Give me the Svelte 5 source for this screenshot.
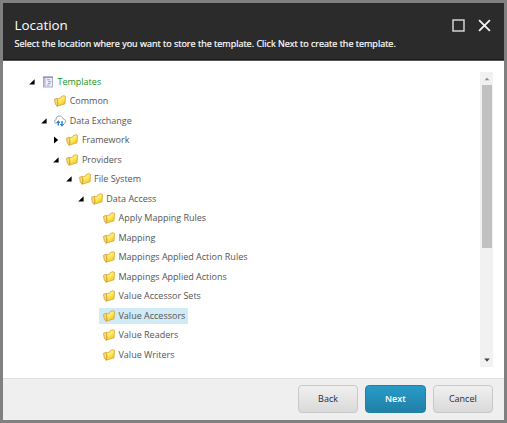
<script>
  const rows = [
    { label: 'Templates', level: 0, arrow: 'open', icon: 'template', root: true },
    { label: 'Common', level: 1, icon: 'folder' },
    { label: 'Data Exchange', level: 1, arrow: 'open', icon: 'exchange' },
    { label: 'Framework', level: 2, arrow: 'closed', icon: 'folder' },
    { label: 'Providers', level: 2, arrow: 'open', icon: 'folder' },
    { label: 'File System', level: 3, arrow: 'open', icon: 'folder' },
    { label: 'Data Access', level: 4, arrow: 'open', icon: 'folder' },
    { label: 'Apply Mapping Rules', level: 5, icon: 'folder' },
    { label: 'Mapping', level: 5, icon: 'folder' },
    { label: 'Mappings Applied Action Rules', level: 5, icon: 'folder' },
    { label: 'Mappings Applied Actions', level: 5, icon: 'folder' },
    { label: 'Value Accessor Sets', level: 5, icon: 'folder' },
    { label: 'Value Accessors', level: 5, icon: 'folder' },
    { label: 'Value Readers', level: 5, icon: 'folder' },
    { label: 'Value Writers', level: 5, icon: 'folder' }
  ];
  let selected = $state('Value Accessors');
</script>

<div class="dialog">
  <header>
    <div class="titles">
      <h1>Location</h1>
      <p>Select the location where you want to store the template. Click Next to create the template.</p>
    </div>
    <div class="tools">
      <svg width="13" height="13" viewBox="0 0 13 13"><rect x="1" y="1" width="11" height="11" fill="none" stroke="#dedede" stroke-width="1.4" /></svg>
      <svg width="13" height="13" viewBox="0 0 13 13"><path d="M1.1 1.1 11.9 11.9M11.9 1.1 1.1 11.9" stroke="#f4f4f4" stroke-width="1.8" /></svg>
    </div>
  </header>

  <main>
    <div class="tree">
      {#each rows as row}
        <div class="row" style="padding-left: {row.level * 12.2}px">
          <span class="arrow">
            {#if row.arrow === 'open'}
              <svg width="6" height="6" viewBox="0 0 6 6"><path d="M5.6 .3V5.4H.2Z" fill="#000" /></svg>
            {:else if row.arrow === 'closed'}
              <svg width="6" height="8" viewBox="0 0 6 8"><path d="M1 .5 5.2 4 1 7.5Z" fill="#000" /></svg>
            {/if}
          </span>
          <button class="node" class:root={row.root} class:selected={row.label === selected} onclick={() => (selected = row.label)}>
            {#if row.icon === 'folder'}
              <svg width="12" height="12" viewBox="0 0 12 12">
                <defs>
                  <linearGradient id="gold" x1="0" y1="0" x2=".6" y2="1">
                    <stop offset="0" stop-color="#fffbc0" />
                    <stop offset=".55" stop-color="#fdea5a" />
                    <stop offset="1" stop-color="#f2c41e" />
                  </linearGradient>
                </defs>
                <path d="M.5 4.3 3.3 3.2 4 4.4 3.2 11.3 1.3 9Z" fill="#fbdc6c" stroke="#cf9426" stroke-width=".7" stroke-linejoin="round" />
                <path d="M3.4 4 6.6 3.1 7.3 1.5 10.3 .6 10.8 1.5 11.5 1.5 11 8.8 3.2 11.2 4.2 9Z" fill="url(#gold)" stroke="#d0992a" stroke-width=".7" stroke-linejoin="round" />
              </svg>
            {:else if row.icon === 'template'}
              <svg width="12" height="12" viewBox="0 0 12 12">
                <rect x="1.5" y="1" width="9" height="10" fill="#ededf8" stroke="#a3a1c4" stroke-width=".9" />
                <path d="M1 1.2H11" stroke="#7f7ca8" stroke-width="1" />
                <path d="M2.8 2V10.7" stroke="#bcbadb" stroke-width="1.5" />
                <path d="M5 3.7H8M6 5.6H9.2M6 7.4H8.6M5 9.1H7.4" stroke="#8e8bb8" stroke-width=".8" />
              </svg>
            {:else}
              <svg width="12" height="12" viewBox="0 0 12 12">
                <path d="M2.4 8.5C.2 8.2.1 5.2 2 4.7 2 .1 8.2-.3 9 3.7 12 3.9 12.2 8 10 8.5" fill="#fff" stroke="#8b9297" stroke-width=".9" />
                <path d="M4.3 10.6V6.5M8 6V10" stroke="#2f80bc" stroke-width="1.4" />
                <path d="M2 8 4.3 5.2 6.5 8ZM5.8 9 8 11.8 10.2 9Z" fill="#2f80bc" />
              </svg>
            {/if}
            <span class="label">{row.label}</span>
          </button>
        </div>
      {/each}
    </div>
    <div class="scrollbar">
      <svg class="cap" width="12" height="13" viewBox="0 0 12 13"><path d="M3.6 8.3 6 5.7 8.4 8.3Z" fill="#8c8c8c" /></svg>
      <div class="thumb"></div>
      <svg class="cap end" width="12" height="12" viewBox="0 0 12 12"><path d="M3.2 3.6H8.8L6 6.7Z" fill="#444" /></svg>
    </div>
  </main>

  <footer>
    <button class="btn">Back</button>
    <button class="btn primary">Next</button>
    <button class="btn">Cancel</button>
  </footer>
</div>

<style>
  .dialog {
    box-sizing: border-box;
    width: 507px;
    height: 423px;
    border: 3px solid #808080;
    display: flex;
    flex-direction: column;
    background: #fff;
    font-family: 'Open Sans', sans-serif;
    overflow: hidden;
  }
  header {
    box-sizing: border-box;
    height: 58px;
    flex: none;
    display: flex;
    justify-content: space-between;
    padding: 12px 13px 0 11.5px;
    background: #2b2b2b;
    border-bottom: 1px solid #555;
    box-shadow: inset 0 -1px #1c1c1c;
    color: #fff;
  }
  h1 {
    margin: 0;
    font-size: 13.4px;
    line-height: 21px;
    font-weight: 400;
  }
  p {
    margin: 0;
    font-size: 9px;
    line-height: 15px;
    white-space: nowrap;
    -webkit-text-stroke: 0.2px #fff;
  }
  .tools {
    display: flex;
    gap: 13px;
    padding-top: 4px;
  }
  svg {
    display: block;
    flex: none;
  }
  main {
    flex: 1;
    min-height: 0;
    display: flex;
    justify-content: space-between;
    padding: 11px 11px 10px 26px;
  }
  .row {
    height: 19.5px;
    display: flex;
    align-items: center;
  }
  .arrow {
    width: 9px;
    flex: none;
  }
  button {
    font-family: inherit;
    margin: 0;
  }
  .node {
    display: flex;
    align-items: center;
    gap: 3.5px;
    height: 16.5px;
    padding: 0 3px 0 4px;
    border: 0;
    background: none;
    color: #545454;
    font-size: 9px;
    line-height: 16px;
    white-space: nowrap;
  }
  .root {
    color: #1a941a;
  }
  .selected {
    background: #d0ebf6;
  }
  .scrollbar {
    width: 13px;
    height: 295px;
    display: flex;
    flex-direction: column;
    align-items: center;
    background: #f1f1f1;
  }
  .thumb {
    width: 10px;
    height: 163px;
    background: #c1c1c1;
  }
  .end {
    margin-top: auto;
  }
  footer {
    box-sizing: border-box;
    height: 42px;
    flex: none;
    display: flex;
    justify-content: flex-end;
    gap: 7px;
    padding: 6px 11px 0 0;
    background: #efefef;
    border-top: 1px solid #dedede;
  }
  .btn {
    box-sizing: border-box;
    width: 60.4px;
    height: 27.5px;
    padding: 0;
    border: 1px solid #c8c8c8;
    border-radius: 4px;
    background: linear-gradient(#f0f0f0, #d9d9d9);
    color: #2b2b2b;
    font-size: 9px;
  }
  .primary {
    border-color: #2180a6;
    background: linear-gradient(#289bc8, #2180a6);
    color: #fff;
    font-weight: 600;
  }
</style>
